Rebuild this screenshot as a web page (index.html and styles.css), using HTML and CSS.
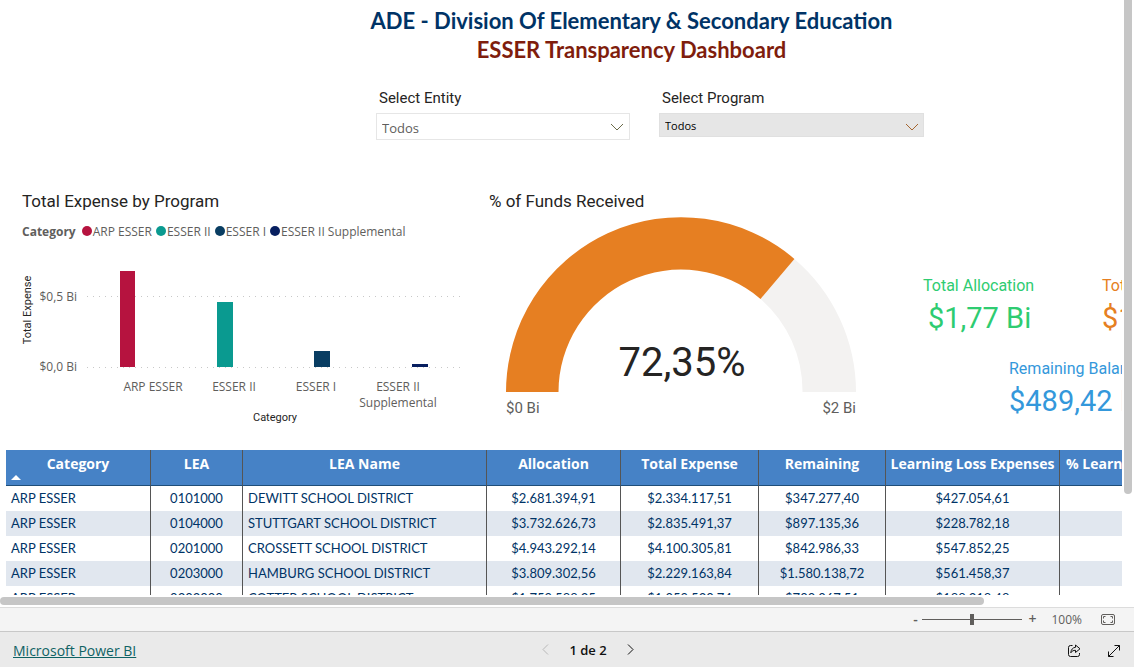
FILE: index.html
```html
<!DOCTYPE html>
<html lang="en">
<head>
<meta charset="utf-8">
<title>ESSER Transparency Dashboard</title>
<link rel="stylesheet" href="styles.css">
</head>
<body>
<div class="stage">
  <main class="viewport">
    <div class="report">
      <header class="heading">
        <h1 class="heading-main">ADE - Division Of Elementary &amp; Secondary Education</h1>
        <h2 class="heading-sub">ESSER Transparency Dashboard</h2>
      </header>

      <div class="filters">
        <div class="filter filter-entity">
          <label class="filter-label" for="entity">Select Entity</label>
          <div class="select-wrap">
            <select class="select select-outline" id="entity"><option>Todos</option></select>
            <svg class="chevron" width="14" height="8" viewBox="0 0 14 8"><path d="M1 1l6 6 6-6"/></svg>
          </div>
        </div>
        <div class="filter filter-program">
          <label class="filter-label" for="program">Select Program</label>
          <div class="select-wrap">
            <select class="select select-filled" id="program"><option>Todos</option></select>
            <svg class="chevron chevron-rust" width="14" height="8" viewBox="0 0 14 8"><path d="M1 1l6 6 6-6"/></svg>
          </div>
        </div>
      </div>

      <div class="visuals">
        <section class="panel panel-bars">
          <h3 class="panel-title">Total Expense by Program</h3>
          <div class="legend">
            <span class="legend-title">Category</span>
            <span class="legend-item"><i class="dot dot-arp"></i>ARP ESSER</span>
            <span class="legend-item"><i class="dot dot-two"></i>ESSER II</span>
            <span class="legend-item"><i class="dot dot-one"></i>ESSER I</span>
            <span class="legend-item"><i class="dot dot-sup"></i>ESSER II Supplemental</span>
          </div>
          <svg class="plot" width="445" height="184" viewBox="0 0 445 184">
            <path class="gridline" d="M65 46.500H440M65 117.500H440"/>
            <rect class="bar-arp" x="98" y="21" width="15" height="96"/>
            <rect class="bar-two" x="195" y="52" width="16" height="65"/>
            <rect class="bar-one" x="292" y="101" width="16" height="16"/>
            <rect class="bar-sup" x="390" y="114" width="16" height="3"/>
            <g class="tick">
              <text x="55" y="51" text-anchor="end">$0,5 Bi</text>
              <text x="55" y="121" text-anchor="end">$0,0 Bi</text>
              <text x="131" y="141" text-anchor="middle">ARP ESSER</text>
              <text x="212" y="141" text-anchor="middle">ESSER II</text>
              <text x="294" y="141" text-anchor="middle">ESSER I</text>
              <text x="376" y="141" text-anchor="middle">ESSER II</text>
              <text x="376" y="157" text-anchor="middle">Supplemental</text>
            </g>
            <text class="axis" x="253" y="171" text-anchor="middle">Category</text>
            <text class="axis" transform="translate(9 60) rotate(-90)" text-anchor="middle">Total Expense</text>
          </svg>
        </section>

        <section class="panel panel-gauge">
          <h3 class="panel-title">% of Funds Received</h3>
          <svg class="gauge" width="384" height="206" viewBox="0 0 384 206">
            <path class="gauge-track" d="M305.400 43.900A175 175 0 0 1 367 177H313.500A122 122 0 0 0 271.500 83.900Z"/>
            <path class="gauge-fill" d="M17 177A175 175 0 0 1 305.400 43.900L271.500 83.900A122.500 122.500 0 0 0 69.500 177Z"/>
            <text class="gauge-value" x="193" y="161" text-anchor="middle">72,35%</text>
            <text class="gauge-end" x="17" y="198">$0 Bi</text>
            <text class="gauge-end" x="367" y="198" text-anchor="end">$2 Bi</text>
          </svg>
        </section>

        <section class="cards">
          <div class="cards-row">
            <div class="card card-green"><span class="card-label">Total Allocation</span><span class="card-value">$1,77 Bi</span></div>
            <div class="card card-orange"><span class="card-label">Total Expense</span><span class="card-value">$1,28 Bi</span></div>
          </div>
          <div class="card card-blue"><span class="card-label">Remaining Balance</span><span class="card-value">$489,42 Mi</span></div>
        </section>
      </div>

      <table class="grid">
        <colgroup><col class="c-cat"><col class="c-lea"><col class="c-name"><col class="c-alloc"><col class="c-exp"><col class="c-rem"><col class="c-loss"><col></colgroup>
        <thead>
          <tr><th class="sorted">Category<svg class="sort" width="10" height="5" viewBox="0 0 10 5"><path d="M0 5L5 0l5 5z"/></svg></th><th>LEA</th><th>LEA Name</th><th>Allocation</th><th>Total Expense</th><th>Remaining</th><th>Learning Loss Expenses</th><th class="last">% Learning Loss Expended</th></tr>
        </thead>
        <tbody>
          <tr><td class="left">ARP ESSER</td><td>0101000</td><td class="left">DEWITT SCHOOL DISTRICT</td><td>$2.681.394,91</td><td>$2.334.117,51</td><td>$347.277,40</td><td>$427.054,61</td><td></td></tr>
          <tr><td class="left">ARP ESSER</td><td>0104000</td><td class="left">STUTTGART SCHOOL DISTRICT</td><td>$3.732.626,73</td><td>$2.835.491,37</td><td>$897.135,36</td><td>$228.782,18</td><td></td></tr>
          <tr><td class="left">ARP ESSER</td><td>0201000</td><td class="left">CROSSETT SCHOOL DISTRICT</td><td>$4.943.292,14</td><td>$4.100.305,81</td><td>$842.986,33</td><td>$547.852,25</td><td></td></tr>
          <tr><td class="left">ARP ESSER</td><td>0203000</td><td class="left">HAMBURG SCHOOL DISTRICT</td><td>$3.809.302,56</td><td>$2.229.163,84</td><td>$1.580.138,72</td><td>$561.458,37</td><td></td></tr>
          <tr><td class="left">ARP ESSER</td><td>0302000</td><td class="left">COTTER SCHOOL DISTRICT</td><td>$1.759.588,25</td><td>$1.059.520,74</td><td>$700.067,51</td><td>$188.218,48</td><td></td></tr>
        </tbody>
      </table>
    </div>
  </main>
  <div class="scroll-y"><div class="thumb-y"></div></div>
  <div class="scroll-x"><div class="thumb-x"></div></div>
</div>

<div class="zoombar">
  <button class="zoom-btn" aria-label="Zoom out">-</button>
  <input class="zoom-range" type="range" min="0" max="100" value="50" aria-label="Zoom">
  <button class="zoom-btn zoom-in" aria-label="Zoom in">+</button>
  <span class="zoom-value">100%</span>
  <button class="icon-btn fit" aria-label="Fit to page">
    <svg width="14" height="11" viewBox="0 0 14 11"><rect x=".5" y=".5" width="13" height="10" rx="1.500"/><path d="M2.500 4.500v-2h2M9.500 2.500h2v2M11.500 6.500v2h-2M4.500 8.500h-2v-2"/></svg>
  </button>
</div>

<footer class="footer">
  <a class="brand" href="#">Microsoft Power BI</a>
  <nav class="pager">
    <button class="icon-btn prev" aria-label="Previous page" disabled><svg width="7" height="11" viewBox="0 0 7 11"><path d="M6 .5l-5 5 5 5"/></svg></button>
    <span class="pager-text">1 de 2</span>
    <button class="icon-btn" aria-label="Next page"><svg width="7" height="11" viewBox="0 0 7 11"><path d="M1 .5l5 5-5 5"/></svg></button>
  </nav>
  <div class="actions">
    <button class="icon-btn" aria-label="Share"><svg width="14" height="14" viewBox="0 0 14 14"><path d="M5.500 1.500H3.500a2 2 0 0 0-2 2v7a2 2 0 0 0 2 2h7a2 2 0 0 0 2-2V9"/><path d="M8.500 1L13 4.800 8.500 8.500V6.300C6.300 6.300 5 7 3.800 8.800 4 5.600 5.800 3.500 8.500 3.300Z"/></svg></button>
    <button class="icon-btn" aria-label="Full screen"><svg width="14" height="14" viewBox="0 0 14 14"><path d="M1.500 12.500l11-11M7.500 1.500h5v5M1.500 7.500v5h5"/></svg></button>
  </div>
</footer>
</body>
</html>
```
FILE: styles.css
```css
* { box-sizing: border-box; }
body {
  margin: 0;
  height: 100vh;
  display: flex;
  flex-direction: column;
  overflow: hidden;
  background: #fff;
  font-family: "Open Sans", sans-serif;
}
h1, h2, h3 { margin: 0; }
button { border: 0; padding: 0; background: none; font: inherit; color: inherit; }

.stage {
  flex: 1;
  min-height: 0;
  display: grid;
  grid-template-columns: minmax(0, 1fr) 12px;
  grid-template-rows: minmax(0, 1fr) 12px;
}
.viewport { overflow: hidden; }
.scroll-y { padding-left: 2px; }
.thumb-y { width: 8px; height: 83%; background: #c6c6c6; border-radius: 0 0 4px 4px; }
.scroll-x { padding-top: 2px; }
.thumb-x { width: 984px; max-width: 88%; height: 8px; background: #c6c6c6; border-radius: 4px; }

.report { min-width: 1263px; }
.heading { padding-top: 6px; text-align: center; font-family: Lato, sans-serif; }
.heading-main, .heading-sub { font-size: 22px; line-height: 29px; font-weight: 700; }
.heading-main { color: #003366; }
.heading-sub { color: #7f1d0d; }

.filters { display: flex; gap: 29px; padding: 24px 0 0 376px; height: 124px; }
.filter { display: flex; flex-direction: column; }
.filter-entity { width: 254px; }
.filter-program { width: 265px; }
.filter-label { padding-left: 3px; font: 15px/20px Roboto, sans-serif; color: #252423; margin-bottom: 5px; }
.select-wrap { position: relative; display: flex; }
.select {
  appearance: none;
  width: 100%;
  border-radius: 0;
  padding: 0 5px;
}
.select-outline { height: 27px; border: 1px solid #e6e6e6; background: #fff; color: #605e5c; font: 13px "Open Sans", sans-serif; padding-top: 2px; }
.select-filled { height: 24px; border: 1px solid #e0e0e0; background: #e6e6e6; color: #000; font: 11px "Open Sans", sans-serif; }
.chevron { position: absolute; right: 6px; top: 10px; fill: none; stroke: #6b6b4a; }
.chevron-rust { stroke: #a5652f; right: 5px; }

.visuals { display: grid; grid-template-columns: 467px 411px 1fr; padding-left: 22px; height: 262px; }
.panel-title { height: 26px; font: 400 17px/27px Roboto, sans-serif; color: #252423; }
.legend { display: flex; align-items: center; gap: 4px; height: 34px; margin-bottom: 2px; font-size: 12px; color: #605e5c; }
.legend-title { font-weight: 700; margin-right: 2px; }
.legend-item { display: flex; align-items: center; gap: 1px; white-space: nowrap; }
.dot { width: 10px; height: 10px; border-radius: 50%; }
.dot-arp { background: #b6133f; }
.dot-two { background: #0a9a90; }
.dot-one { background: #093d62; }
.dot-sup { background: #071f60; }
.plot { display: block; }
.gridline { stroke: #c8c8c8; stroke-dasharray: 1 5; }
.bar-arp { fill: #b6133f; }
.bar-two { fill: #0a9a90; }
.bar-one { fill: #093d62; }
.bar-sup { fill: #071f60; }
.tick { font-size: 12px; fill: #605e5c; }
.axis { font: 11px Roboto, sans-serif; fill: #252423; }
.gauge { display: block; margin-top: 1px; }
.gauge-fill { fill: #e67f22; }
.gauge-track { fill: #f3f2f1; }
.gauge-value { font: 40px Roboto, sans-serif; fill: #252423; }
.gauge-end { font: 15px Roboto, sans-serif; fill: #605e5c; }

.cards { padding: 85px 0 0 23px; display: flex; flex-direction: column; gap: 17px; }
.cards-row { display: flex; }
.card { display: flex; flex-direction: column; font-family: Roboto, sans-serif; white-space: nowrap; }
.card-label { font-size: 16px; line-height: 25px; }
.card-value { font-size: 29px; line-height: 41px; }
.card-green { width: 179px; color: #2ecc71; }
.card-green .card-value { padding-left: 5px; }
.card-orange { color: #e67f22; }
.card-blue { padding-left: 86px; color: #3498db; }

.grid { width: 1257px; margin-left: 6px; table-layout: fixed; border-collapse: separate; border-spacing: 0; }
.c-cat { width: 145px; }
.c-lea { width: 92px; }
.c-name { width: 244px; }
.c-alloc { width: 134px; }
.c-exp { width: 138px; }
.c-rem { width: 127px; }
.c-loss { width: 174px; }
.grid th {
  height: 36px;
  padding: 4px 0 0 0;
  vertical-align: top;
  background: #4682c6;
  color: #fff;
  font: 700 14px/20px "Open Sans", sans-serif;
  border-right: 1px solid #555;
  border-bottom: 1px solid #1f4e79;
  white-space: nowrap;
}
.grid .sorted { position: relative; }
.sort { position: absolute; left: 5px; bottom: 5px; fill: #fff; }
.grid .last { text-align: left; padding-left: 6px; }
.grid td {
  height: 25px;
  padding: 0 5px 1px;
  text-align: center;
  font: 13px/24px Lato, sans-serif;
  color: #003366;
  border-right: 1px solid #555;
  white-space: nowrap;
}
.grid .left { text-align: left; }
.grid tbody tr:nth-child(even) { background: #e1e7ef; }

.zoombar {
  display: flex;
  align-items: center;
  justify-content: flex-end;
  height: 24px;
  padding: 0 19px 1px 0;
  background: #f4f4f4;
  border-top: 1px solid #dcdcdc;
  color: #605e5c;
  font-size: 12px;
}
.zoom-btn { width: 10px; font-size: 14px; line-height: 20px; font-weight: 600; }
.zoom-range { appearance: none; width: 100px; height: 12px; margin: 0 5px 0 2px; background: linear-gradient(#605e5c, #605e5c) center / 100% 1px no-repeat; }
.zoom-range::-webkit-slider-thumb { appearance: none; width: 4px; height: 11px; background: #605e5c; }
.zoom-value { margin: 0 19px 0 14px; }
.icon-btn { display: flex; align-items: center; justify-content: center; }
.icon-btn svg { fill: none; stroke: #111; display: block; }
.fit svg { stroke: #605e5c; }

.footer {
  display: grid;
  grid-template-columns: 1fr auto 1fr;
  align-items: center;
  height: 36px;
  padding: 0 13px;
  background: #eaeaea;
  border-top: 1px solid #c8c8c8;
  font-size: 13px;
}
.brand { justify-self: start; padding-top: 2px; font-size: 14px; color: #0f6264; }
.pager { display: flex; align-items: center; gap: 20px; margin-right: -42px; }
.pager-text { font-weight: 600; color: #111; }
.prev svg { stroke: #b8b8b8; }
.actions { justify-self: end; display: flex; gap: 26px; padding-top: 2px; }
```
